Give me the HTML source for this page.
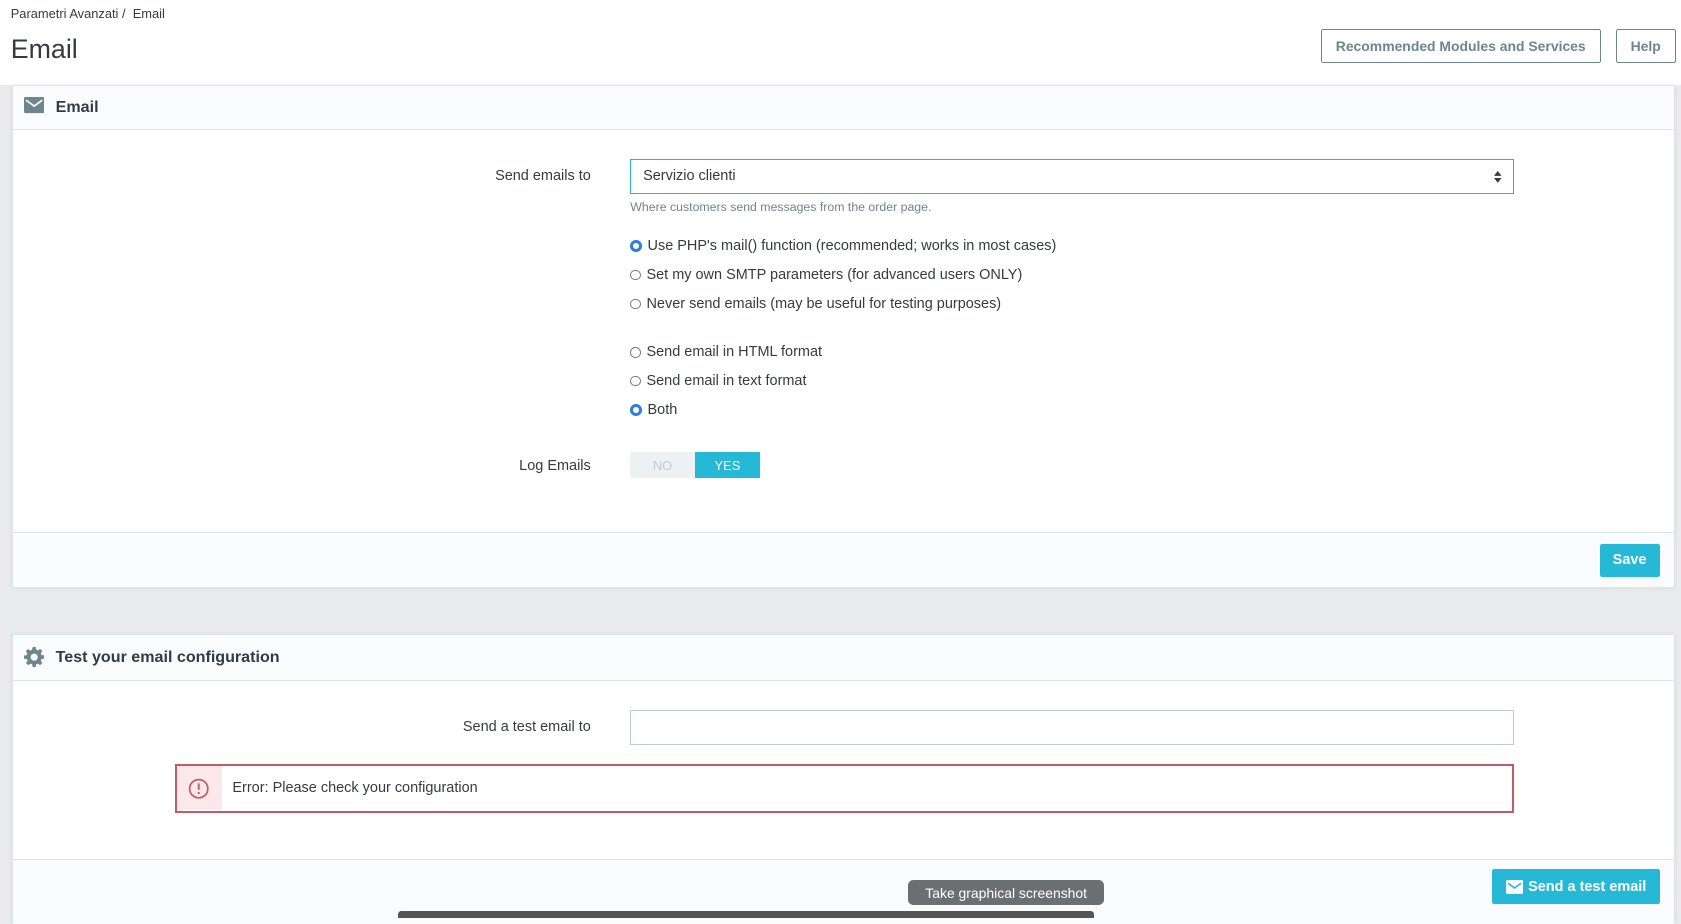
<!DOCTYPE html>
<html><head><meta charset="utf-8"><style>
html,body{margin:0;padding:0}
body{width:1568px;height:855px;zoom:1.0721;background:#eaebec;font-family:"Liberation Sans",sans-serif;color:#363a41;font-size:13px;position:relative;overflow:hidden}
.top{position:absolute;left:0;top:0;width:1568px;height:79px;background:#fff}
.abs{position:absolute}
.btn{position:absolute;border:1px solid #6c868e;color:#6c868e;background:#fff;font-weight:bold;font-size:13px;display:flex;align-items:center;justify-content:center;box-sizing:border-box;border-radius:2px}
.card{position:absolute;left:11px;width:1551px;background:#fff;border:1px solid #dbe6e9;box-sizing:border-box;box-shadow:0 0 4px rgba(0,0,0,.08)}
.hd{position:absolute;left:0;right:0;top:0;background:#fafbfc;border-bottom:1px solid #dbe6e9;font-size:15px;font-weight:bold;display:flex;align-items:center;padding-left:40px;box-sizing:border-box}
.ft{position:absolute;left:0;right:0;background:#fafbfc;border-top:1px solid #dbe6e9}
.lbl{position:absolute;right:1017px;font-size:13.5px;text-align:right;white-space:nowrap}
.card .lbl{right:1010px}
.radio{position:absolute;left:588px;font-size:13.5px;display:flex;align-items:center;white-space:nowrap}
.radio i{display:inline-block;width:10px;height:10px;border:1px solid #777;border-radius:50%;margin-right:5px;box-sizing:border-box;background:#fff}
.radio i.on{border:3px solid #2a7de1;background:#fff;width:11px;height:11px}
.blue{background:#25b9d7;color:#fff;font-weight:bold;display:flex;align-items:center;justify-content:center;position:absolute;border-radius:2px;font-size:13.5px}
</style></head><body>
<div class="top"></div>
<div class="abs" style="left:10px;top:6px;font-size:12px">Parametri Avanzati /&nbsp; Email</div>
<div class="abs" style="left:10px;top:32px;font-size:25px">Email</div>
<div class="btn" style="left:1232px;top:27px;width:261px;height:32px">Recommended Modules and Services</div>
<div class="btn" style="left:1507px;top:27px;width:56px;height:32px">Help</div>

<div class="card" style="top:79px;height:469px">
 <div class="hd" style="height:41px">
  <svg class="abs" style="left:10px;top:11px" width="19" height="15" viewBox="0 0 19 15"><rect width="19" height="15" rx="1.5" fill="#6c868e"/><path d="M2 3l7.5 5.5L17 3" stroke="#fff" stroke-width="1.6" fill="none"/></svg>
  Email</div>
 <div class="lbl" style="top:77px">Send emails to</div>
 <div class="abs" style="left:576px;top:68px;width:824px;height:33px;border:1px solid #25b9d7;box-sizing:border-box;font-size:13.5px;padding:8px 11px">Servizio clienti
  <svg class="abs" style="right:10px;top:11px" width="7" height="11" viewBox="0 0 7 11"><path d="M0 4.5L3.5 0 7 4.5zM0 6.5L3.5 11 7 6.5z" fill="#363a41"/></svg></div>
 <div class="abs" style="left:576px;top:107px;font-size:11.5px;color:#6c868e">Where customers send messages from the order page.</div>
</div>
<div class="radio" style="top:222px"><i class="on"></i>Use PHP's mail() function (recommended; works in most cases)</div>
<div class="radio" style="top:249px"><i></i>Set my own SMTP parameters (for advanced users ONLY)</div>
<div class="radio" style="top:276px"><i></i>Never send emails (may be useful for testing purposes)</div>
<div class="radio" style="top:321px"><i></i>Send email in HTML format</div>
<div class="radio" style="top:348px"><i></i>Send email in text format</div>
<div class="radio" style="top:375px"><i class="on"></i>Both</div>
<div class="lbl" style="top:427px">Log Emails</div>
<div class="abs" style="left:588px;top:422px;width:60px;height:24px;background:#eef1f3;color:#c5cbd0;font-size:12px;display:flex;align-items:center;justify-content:center">NO</div>
<div class="blue" style="left:648px;top:422px;width:61px;height:24px;font-size:12px;font-weight:normal;border-radius:0">YES</div>
<div class="ft" style="left:12px;width:1549px;top:496px;height:51px;position:absolute"></div>
<div class="blue" style="left:1492px;top:507px;width:56px;height:31px">Save</div>

<div class="card" style="top:591px;height:270px">
 <div class="hd" style="height:43px">
  <svg class="abs" style="left:10px;top:12px" width="19" height="19" viewBox="0 0 20 20"><path fill="#6c868e" d="M8.5 0h3l.5 2.6 1.7.7 2.2-1.5 2.1 2.1-1.5 2.2.7 1.7 2.6.5v3l-2.6.5-.7 1.7 1.5 2.2-2.1 2.1-2.2-1.5-1.7.7-.5 2.6h-3l-.5-2.6-1.7-.7-2.2 1.5-2.1-2.1 1.5-2.2-.7-1.7L0 11.5v-3l2.6-.5.7-1.7-1.5-2.2 2.1-2.1 2.2 1.5 1.7-.7zM10 6.5a3.5 3.5 0 100 7 3.5 3.5 0 000-7z"/></svg>
  Test your email configuration</div>
 <div class="lbl" style="top:79px">Send a test email to</div>
 <div class="abs" style="left:576px;top:70px;width:824px;height:33px;border:1px solid #bbcdd2;box-sizing:border-box"></div>
 <div class="abs" style="left:151px;top:121px;width:1249px;height:45px;border:2px solid #c05c67;box-sizing:border-box;background:#fff">
  <div class="abs" style="left:0;top:0;width:42px;height:41px;background:#fbe8ea;display:flex;align-items:center;justify-content:center">
   <svg width="20" height="20" viewBox="0 0 20 20"><circle cx="10" cy="10" r="8.5" fill="none" stroke="#c05c67" stroke-width="1.6"/><path d="M10 5v6" stroke="#c05c67" stroke-width="1.8"/><circle cx="10" cy="14" r="1.1" fill="#c05c67"/></svg></div>
  <div class="abs" style="left:52px;top:13px;font-size:13.5px">Error: Please check your configuration</div>
 </div>
 <div class="ft" style="top:209px;height:60px"></div>
</div>
<div class="blue" style="left:1392px;top:811px;width:156px;height:32px">
 <svg width="16" height="13" viewBox="0 0 16 13" style="margin-right:5px"><rect width="16" height="13" rx="1.5" fill="#fff"/><path d="M2 3l6 4.5L14 3" stroke="#25b9d7" stroke-width="1.5" fill="none"/></svg>Send a test email</div>
<div class="abs" style="left:847px;top:821px;width:183px;height:23px;background:#6c6f72;color:#fff;border-radius:5px;font-size:13px;display:flex;align-items:center;justify-content:center">Take graphical screenshot</div>
<div class="abs" style="left:371px;top:850px;width:649px;height:6px;background:#555;border-radius:3px 3px 0 0"></div>
</body></html>
